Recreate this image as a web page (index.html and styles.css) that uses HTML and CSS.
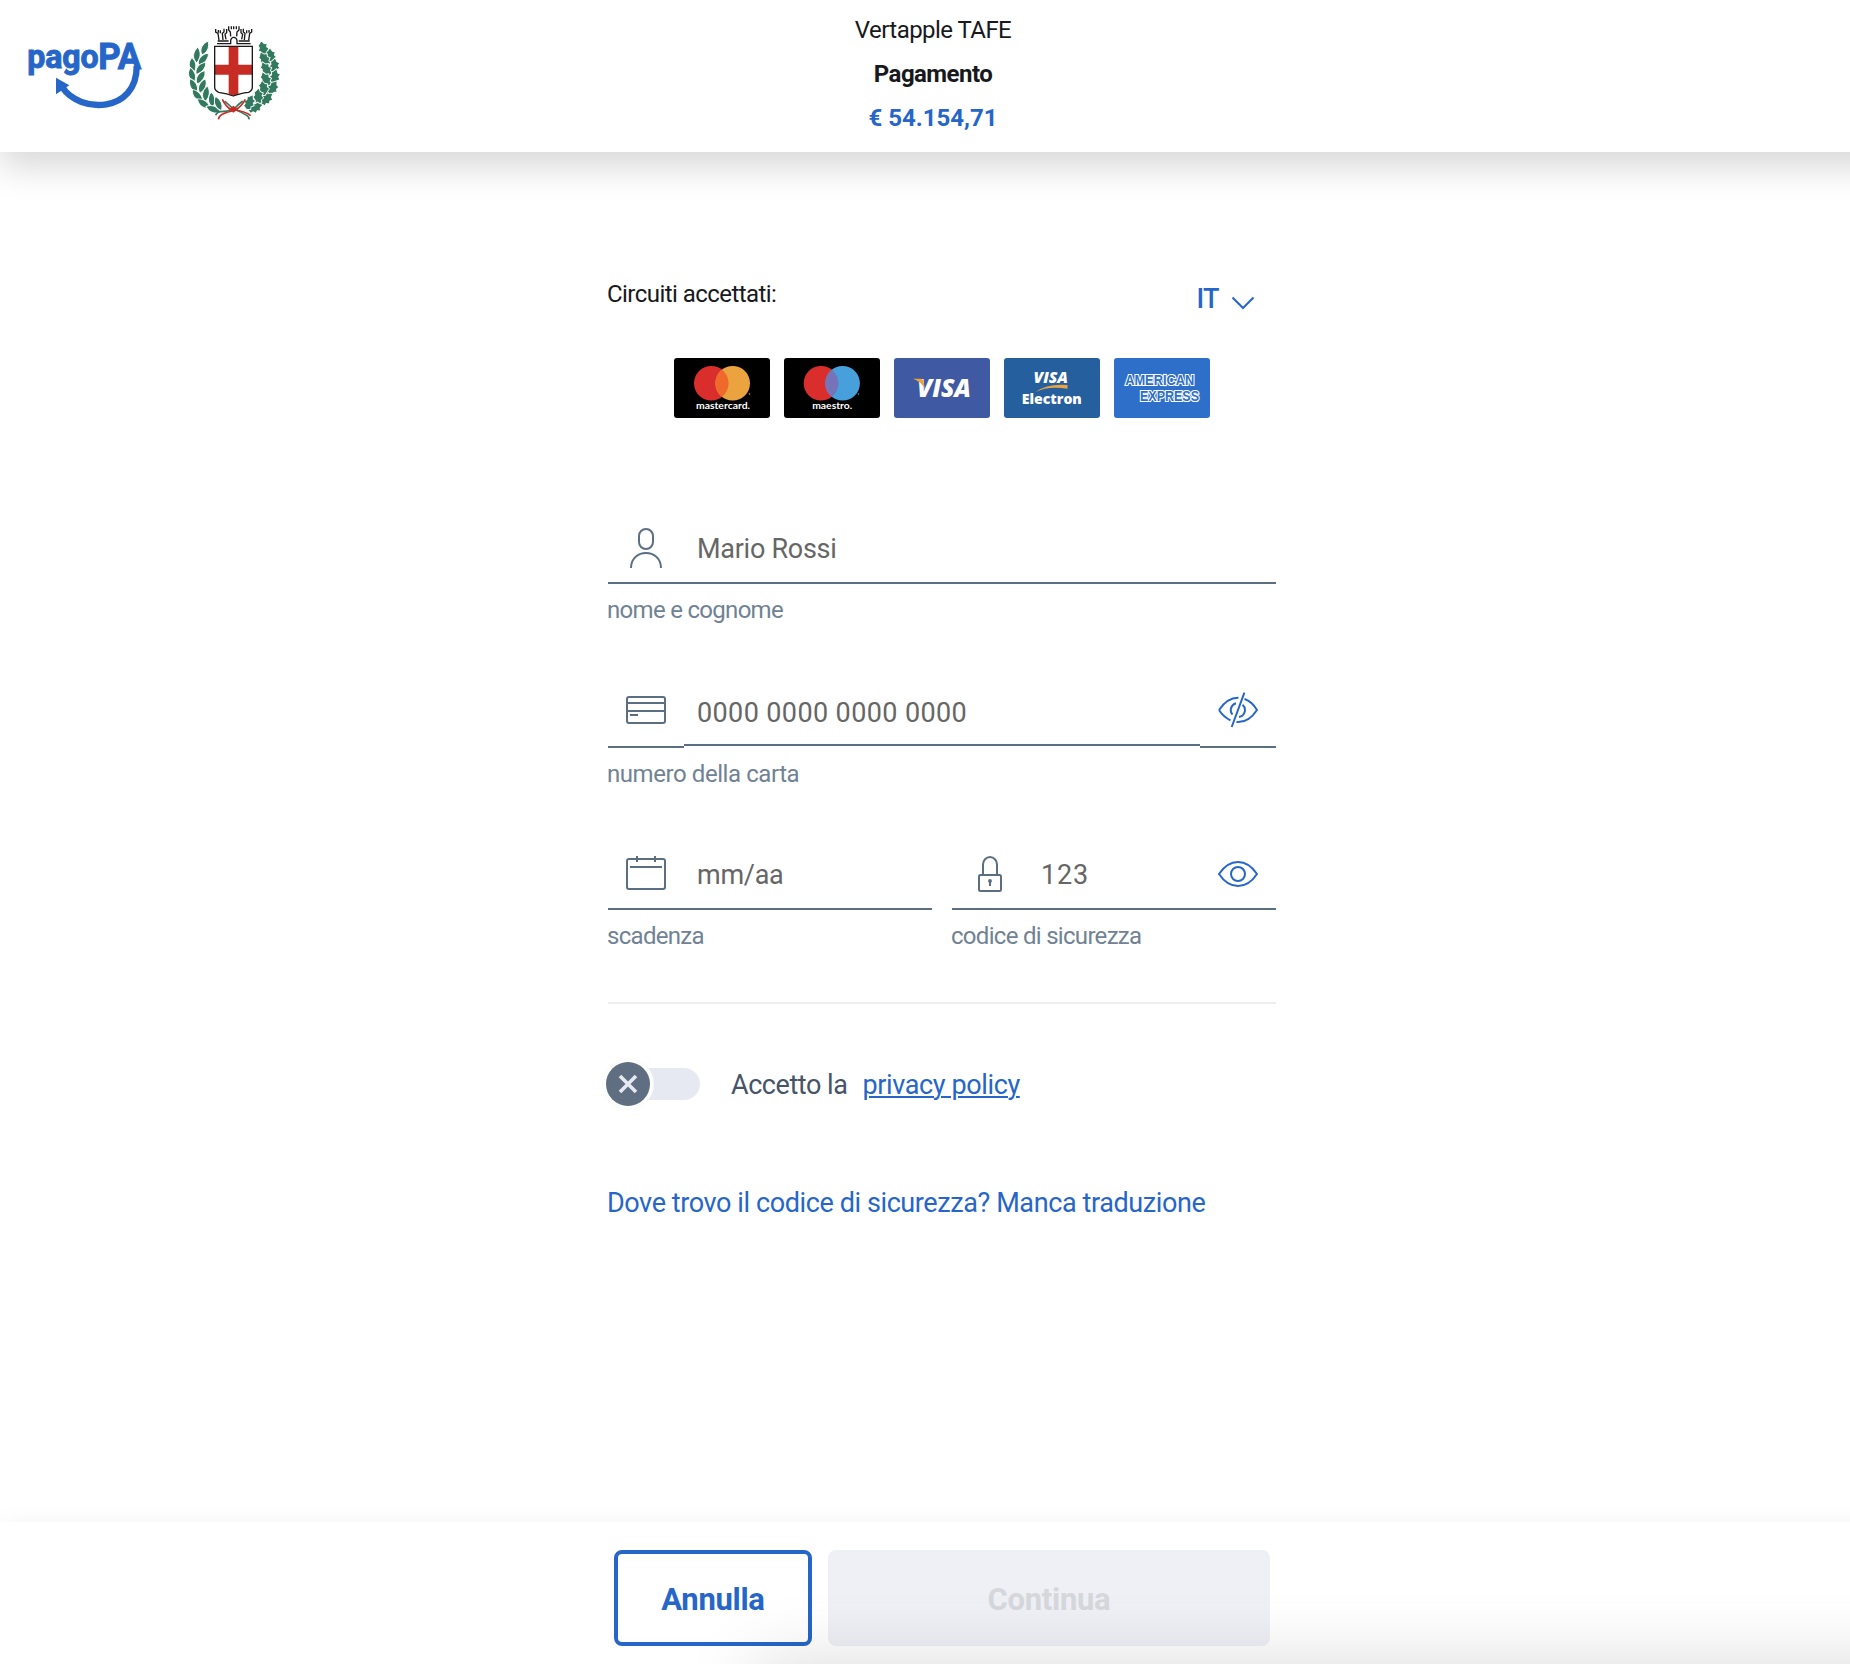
FILE: index.html
```html
<!DOCTYPE html>
<html lang="it">
<head>
<meta charset="utf-8">
<title>Pagamento - pagoPA</title>
<link rel="stylesheet" href="styles.css">
</head>
<body>
<header class="header">
  <div class="brands">
    <svg class="brand-pago" viewBox="81 120 342 204" role="img" aria-label="pagoPA">
      <g fill="#2666c8" stroke="#2666c8" stroke-width="3" font-family="Roboto, sans-serif" font-weight="700">
        <text x="82" y="205" font-size="101" textLength="213" lengthAdjust="spacingAndGlyphs">pago</text>
        <text x="295" y="207" font-size="112" textLength="128" lengthAdjust="spacingAndGlyphs">PA</text>
      </g>
      <path d="M410 198C412 338 240 343 187 262" fill="none" stroke="#2666c8" stroke-width="19"/>
      <path d="M168 233L208 256L168 283Z" fill="#2666c8"/>
    </svg>
    <svg class="brand-city" viewBox="0 0 390 390" role="img" aria-label="Comune di Milano">
      <defs>
        <path id="leaf" d="M0 4C-14-8-11-30 5-42C15-28 13-8 0 4Z"/>
        <path id="oak" d="M0 4L-12-1L-9-9L-16-16L-10-22L-13-31L-4-33L3-44L10-34L15-30L12-22L17-15L11-9L12-1Z"/>
        <g id="branch-left">
          <use href="#leaf" transform="translate(98 132) rotate(16)"/>
          <use href="#leaf" transform="translate(80 154) rotate(-2)"/><use href="#leaf" transform="translate(88 162) rotate(34)"/>
          <use href="#leaf" transform="translate(71 184) rotate(-14)"/><use href="#leaf" transform="translate(81 190) rotate(32)"/>
          <use href="#leaf" transform="translate(72 213) rotate(-22)"/><use href="#leaf" transform="translate(83 218) rotate(24)"/>
          <use href="#leaf" transform="translate(80 243) rotate(-34)"/><use href="#leaf" transform="translate(91 246) rotate(15)"/>
          <use href="#leaf" transform="translate(95 270) rotate(-48)"/><use href="#leaf" transform="translate(106 270) rotate(2)"/>
          <use href="#leaf" transform="translate(117 291) rotate(-62)"/><use href="#leaf" transform="translate(128 288) rotate(-12)"/>
          <use href="#leaf" transform="translate(148 303) rotate(-78)"/><use href="#leaf" transform="translate(153 298) rotate(-30)"/>
        </g>
        <g id="branch-right">
          <use href="#oak" transform="translate(98 134) rotate(10)"/>
          <use href="#oak" transform="translate(79 157) rotate(0)"/><use href="#oak" transform="translate(90 164) rotate(24)"/>
          <use href="#oak" transform="translate(71 187) rotate(-10)"/><use href="#oak" transform="translate(85 194) rotate(24)"/>
          <use href="#oak" transform="translate(72 219) rotate(-17)"/><use href="#oak" transform="translate(87 225) rotate(20)"/>
          <use href="#oak" transform="translate(83 250) rotate(-34)"/><use href="#oak" transform="translate(97 254) rotate(8)"/>
          <use href="#oak" transform="translate(106 279) rotate(-52)"/><use href="#oak" transform="translate(118 278) rotate(-6)"/>
          <use href="#oak" transform="translate(144 299) rotate(-74)"/><use href="#oak" transform="translate(151 294) rotate(-28)"/>
        </g>
      </defs>
      <g fill="#33795f" stroke="#fff" stroke-width="2.800">
        <use href="#branch-left"/>
        <use href="#branch-right" transform="translate(382 0) scale(-1 1)"/>
      </g>
      <g fill="none" stroke-width="5">
        <path d="M164 273Q176 284 190 297Q168 306 150 305Q140 307 137 316" stroke="#33795f"/>
        <path d="M157 268Q168 291 184 299" stroke="#c62b24"/>
        <path d="M186 303Q158 310 152 316Q147 320 145 328" stroke="#c62b24"/>
        <path d="M218 273Q204 284 192 297Q214 306 230 316Q238 321 237 328" stroke="#33795f"/>
        <path d="M226 268Q214 290 196 300Q226 304 242 317" stroke="#c62b24"/>
      </g>
      <path d="M190 287L204 298L190 308L177 298Z" fill="#c62b24"/>
      <path d="M134 109H247V232Q247 244 236 248Q208 250 190 258Q172 250 146 248Q134 244 134 232Z" fill="#fff"/>
      <path d="M176 109H205V252L190 257L176 252ZM134 164H247V194H134Z" fill="#c62b24"/>
      <path d="M134 109H247V232Q247 242 236 247Q208 250 190 258Q172 250 146 247Q134 242 134 232Z" fill="none" stroke="#1c1a1a" stroke-width="4"/>
      <g fill="none" stroke="#1c1a1a" stroke-width="4">
        <path d="M141 101H182V91Q184 82 191 82Q199 82 201 91V101H242M143 93H176M206 93H239"/>
        <path d="M147 91L144 70L137 66V57M159 90L157 70L162 66V56M236 91L239 70L245 66V57M223 90L225 70L220 66V56"/>
        <path d="M145 68V60M151 70V61M168 88L165 73L170 68V57M215 88L218 73L213 68V57M237 68V60M230 70V61"/>
        <path d="M182 79L181 66L176 60V49M200 79L201 66L207 60V49M184 58V49M191 58V49M199 58V49"/>
      </g>
    </svg>
  </div>
  <div class="summary">
    <div class="summary-payee">Vertapple TAFE</div>
    <div class="summary-subject">Pagamento</div>
    <div class="summary-amount">€ 54.154,71</div>
  </div>
</header>

<main class="main">
  <form class="form">
    <div class="top-row">
      <span class="circuits-label">Circuiti accettati:</span>
      <span class="language">IT
        <svg class="chevron" viewBox="0 0 24 14"><path d="M1.500 1.500L12 12L22.500 1.500" fill="none" stroke="#2666c8" stroke-width="2"/></svg>
      </span>
    </div>

    <div class="cards">
      <svg class="card" viewBox="0 0 96 60" role="img" aria-label="mastercard">
        <rect width="96" height="60" rx="3"/>
        <circle cx="37.300" cy="25.300" r="17.300" fill="#d92e2c"/><circle cx="58.700" cy="25.300" r="17.300" fill="#eba340"/>
        <path d="M48 11.700A17.300 17.300 0 0 1 48 38.900A17.300 17.300 0 0 1 48 11.700Z" fill="#ef6a2a"/>
        <circle cx="75.500" cy="36" r=".8" fill="#eba340"/>
        <text x="22" y="51" textLength="54" lengthAdjust="spacingAndGlyphs" class="card-name">mastercard.</text>
      </svg>
      <svg class="card" viewBox="0 0 96 60" role="img" aria-label="maestro">
        <rect width="96" height="60" rx="3"/>
        <circle cx="37" cy="25.300" r="17.300" fill="#d92e2c"/><circle cx="58.600" cy="25.300" r="17.300" fill="#47a0db"/>
        <path d="M47.800 11.700A17.300 17.300 0 0 1 47.800 38.900A17.300 17.300 0 0 1 47.800 11.700Z" fill="#7673b9"/>
        <circle cx="74.500" cy="36" r=".8" fill="#47a0db"/>
        <text x="28.200" y="51" textLength="40" lengthAdjust="spacingAndGlyphs" class="card-name">maestro.</text>
      </svg>
      <svg class="card" viewBox="0 0 96 60" role="img" aria-label="VISA">
        <rect width="96" height="60" rx="3" fill="#3f59a2"/>
        <text x="23" y="39.300" font-size="25.500" textLength="54" lengthAdjust="spacingAndGlyphs" class="visa">VISA</text>
        <path d="M19 20.800H27Q29 21 29.500 23L30.800 31Q27 23.500 19 20.800Z" fill="#eba340"/>
      </svg>
      <svg class="card" viewBox="0 0 96 60" role="img" aria-label="VISA Electron">
        <rect width="96" height="60" rx="3" fill="#265f9e"/>
        <text x="29.500" y="24.600" font-size="15.500" textLength="34.500" lengthAdjust="spacingAndGlyphs" class="visa">VISA</text>
        <path d="M31.500 34Q43 25.500 63.500 27V30.800Q44 27.600 31.500 34Z" fill="#eba340"/>
        <text x="17.800" y="46.200" font-size="14" textLength="60" lengthAdjust="spacingAndGlyphs" class="electron">Electron</text>
      </svg>
      <svg class="card" viewBox="0 0 96 60" role="img" aria-label="AMERICAN EXPRESS">
        <rect width="96" height="60" rx="3" fill="#2d6fc9"/>
        <text x="11.200" y="27" textLength="69" lengthAdjust="spacingAndGlyphs" class="amex">AMERICAN</text>
        <text x="26" y="42.600" textLength="59" lengthAdjust="spacingAndGlyphs" class="amex">EXPRESS</text>
      </svg>
    </div>

    <div class="field field-name">
      <div class="control">
        <span class="addon"><svg width="32" height="40" viewBox="0 0 32 40"><rect x="9" y="1" width="14" height="20" rx="7"/><path d="M1 40C1 20 31 20 31 40"/></svg></span>
        <input class="input" type="text" placeholder="Mario Rossi">
      </div>
      <label class="label">nome e cognome</label>
    </div>

    <div class="field field-number">
      <div class="control">
        <span class="addon"><svg width="40" height="28" viewBox="0 0 40 28"><rect x="1" y="1" width="38" height="26" rx="2"/><path d="M1 7H39M1 15H39M4 19H12"/></svg></span>
        <input class="input input-number" type="text" placeholder="0000 0000 0000 0000">
        <span class="addon"><svg class="eye" width="40" height="36" viewBox="0 0 40 36"><path d="M1 18Q9.500 5.500 20.500 5.800M26.500 7Q34 9.500 39 18Q30.500 31 18.500 30M12.500 28.300Q5.500 25 1 18M18 11.200A7 7 0 0 0 14.500 22.600M24.500 12.700A7 7 0 0 1 21 24.900M26.400 .7L13.700 35"/></svg></span>
      </div>
      <label class="label">numero della carta</label>
    </div>

    <div class="field-row">
      <div class="field">
        <div class="control">
          <span class="addon addon-calendar"><svg width="40" height="34" viewBox="0 0 40 34"><rect x="1" y="3" width="38" height="30" rx="2"/><path d="M4 11H36M11 0V6M29 0V6"/></svg></span>
          <input class="input" type="text" placeholder="mm/aa">
        </div>
        <label class="label">scadenza</label>
      </div>
      <div class="field">
        <div class="control">
          <span class="addon"><svg width="24" height="36" viewBox="0 0 24 36"><rect x="1" y="19" width="22" height="16" rx="1.500"/><path d="M5 19V8.500A7 7.500 0 0 1 19 8.500V19"/><path d="M12 25V30" stroke-width="2"/><circle cx="12" cy="25" r="1.200" fill="#5c6f82" stroke-width="1.500"/></svg></span>
          <input class="input input-cvc" type="text" placeholder="123">
          <span class="addon"><svg class="eye" width="40" height="26" viewBox="0 0 40 26"><path d="M1 13Q9 1 20 1Q31 1 39 13Q31 25 20 25Q9 25 1 13Z"/><circle cx="20" cy="13" r="7"/></svg></span>
        </div>
        <label class="label">codice di sicurezza</label>
      </div>
    </div>

    <hr class="divider">

    <div class="consent">
      <span class="toggle"><span class="toggle-knob"><svg width="20" height="20" viewBox="0 0 20 20"><path d="M2 2L18 18M18 2L2 18" stroke="#e6e9f2" stroke-width="3.600"/></svg></span></span>
      <span class="consent-text">Accetto la</span>
      <a class="consent-link" href="#">privacy policy</a>
    </div>

    <a class="help" href="#">Dove trovo il codice di sicurezza? Manca traduzione</a>
  </form>
</main>

<footer class="footer">
  <button class="btn btn-cancel" type="button">Annulla</button>
  <button class="btn btn-continue" type="button" disabled>Continua</button>
  <div class="sheet-shadow"></div>
</footer>
</body>
</html>
```

FILE: styles.css
```css
* {
  box-sizing: border-box;
}

body {
  margin: 0;
  min-height: 1664px;
  display: flex;
  flex-direction: column;
  background: #fff;
  color: #17191c;
  font-family: Roboto, "Liberation Sans", sans-serif;
  font-size: 24px;
  letter-spacing: -0.55px;
  overflow-x: hidden;
}

a {
  color: #2666c8;
  text-decoration: none;
}

/* Header: runs past the right edge so its shadow does not fade there */

.header {
  display: grid;
  grid-template-columns: 1fr auto 1fr;
  width: calc(100% + 40px);
  height: 152px;
  padding: 8px 40px 12px 16px;
  box-shadow: 0 16px 32px rgba(0, 0, 0, 0.15);
}

.brands {
  display: flex;
  align-items: flex-start;
  gap: 29px;
  padding: 2px 0 0 11px;
}

.brand-pago {
  width: 114px;
  height: 68px;
  margin-top: 30px;
  overflow: visible;
}

.brand-city {
  width: 130px;
  height: 130px;
}

.summary {
  line-height: 44px;
  text-align: center;
}

.summary-subject,
.summary-amount {
  font-weight: 700;
}

.summary-amount {
  color: #2666c8;
  letter-spacing: 0;
}

/* Form */

.main {
  flex: 1;
  padding: 120px 0 0 34px;
}

.form {
  width: 668px;
  margin: 0 auto;
}

.top-row {
  display: flex;
  justify-content: space-between;
  height: 54px;
  padding-right: 21px;
}

.circuits-label {
  margin-left: -1px;
  line-height: 44px;
}

.language {
  display: flex;
  align-items: center;
  gap: 12px;
  color: #2666c8;
  font-size: 27px;
  font-weight: 500;
}

.chevron {
  width: 24px;
  height: 14px;
  margin-top: 7px;
}

.cards {
  display: flex;
  justify-content: center;
  gap: 14px;
  margin-top: 32px;
}

.card {
  width: 96px;
  height: 60px;
}

.card-name {
  fill: #fff;
  font: 700 9.5px Lato, sans-serif;
  letter-spacing: 0;
}

.visa {
  fill: #fff;
  font-family: "Open Sans", sans-serif;
  font-weight: 800;
  font-style: italic;
  letter-spacing: 0;
}

.electron {
  fill: #fff;
  font-family: "Open Sans", sans-serif;
  font-weight: 800;
  letter-spacing: 0;
}

.amex {
  fill: #2d6fc9;
  stroke: #fff;
  stroke-width: 2.2px;
  paint-order: stroke;
  font: 700 14px "Liberation Sans", sans-serif;
  letter-spacing: 0;
}

.control {
  display: flex;
  height: 70px;
}

.addon {
  display: flex;
  align-items: center;
  justify-content: center;
  flex: 0 0 76px;
  border-bottom: 2px solid #5c6f82;
}

.addon svg {
  fill: none;
  stroke: #5c6f82;
  stroke-width: 2;
}

.addon .eye {
  stroke: #2666c8;
}

.addon-calendar {
  padding-bottom: 2px;
}

.input {
  flex: 1;
  min-width: 0;
  padding: 2px 0 0 13px;
  border: 0;
  border-bottom: 2px solid #5c6f82;
  background: none;
  font: 27px Roboto, "Liberation Sans", sans-serif;
  letter-spacing: -0.27px;
  outline: 0;
}

.input::placeholder {
  color: #666;
  opacity: 1;
}

.input-cvc {
  letter-spacing: 0.8px;
}

.label {
  display: block;
  margin: 10px 0 0 -1px;
  line-height: 32px;
  color: #708294;
  letter-spacing: -0.7px;
}

.field-name {
  margin-top: 96px;
}

.field-number {
  margin-top: 52px;
}

.field-number .addon {
  padding-bottom: 4px;
}

.input-number {
  height: 68px;
  padding-top: 4px;
  letter-spacing: 0.38px;
}

.field-number .label {
  letter-spacing: -0.43px;
}

.field-row {
  display: grid;
  grid-template-columns: repeat(2, minmax(0, 1fr));
  gap: 20px;
  margin-top: 50px;
}

.divider {
  margin: 50px 0 0;
  border: 0;
  border-top: 2px solid #eee;
}

.consent {
  display: flex;
  align-items: center;
  height: 44px;
  margin: 58px 0 0 -2px;
  font-size: 27px;
  letter-spacing: -0.45px;
}

.toggle {
  display: flex;
  align-items: center;
  width: 94px;
  height: 32px;
  margin-right: 31px;
  border-radius: 16px;
  background: linear-gradient(90deg, #fff 20px, #e6e9f2 20px);
}

.toggle-knob {
  display: flex;
  align-items: center;
  justify-content: center;
  width: 44px;
  height: 44px;
  flex: none;
  border-radius: 50%;
  background: #5f6e80;
  box-shadow: 0 0 0 3px #fff, 0 0 0 4px #fafafb;
}

.consent-text,
.consent-link {
  padding-top: 2px;
}

.consent-text {
  color: #455468;
}

.consent-link {
  margin-left: 15px;
  letter-spacing: -0.38px;
  text-decoration: underline;
  text-decoration-thickness: 2px;
  text-underline-offset: 2px;
}

.help {
  display: block;
  margin: 77px 0 0 -1px;
  line-height: 40px;
  font-size: 27px;
  letter-spacing: -0.4px;
}

/* Footer */

.footer {
  position: relative;
  display: flex;
  justify-content: center;
  gap: 16px;
  width: calc(100% + 40px);
  height: 142px;
  padding: 28px 40px 0 34px;
  background: #fff;
  box-shadow: 0 16px 32px rgba(0, 0, 0, 0.15);
  overflow: hidden;
}

.btn {
  height: 96px;
  padding: 2px 0 0;
  border: 0;
  border-radius: 8px;
  font: 700 31px Roboto, "Liberation Sans", sans-serif;
  letter-spacing: -0.3px;
}

.btn-cancel {
  width: 198px;
  border: 4px solid #2666c8;
  background: #fff;
  color: #2666c8;
}

.btn-continue {
  width: 442px;
  background: #eff0f6;
  color: #d5d7db;
}

/* Top edge of the bottom sheet's shadow, cast over the footer */
.sheet-shadow {
  position: absolute;
  top: 142px;
  left: 755px;
  right: -100px;
  height: 100px;
  box-shadow: 0 0 72px rgba(0, 0, 0, 0.15);
  pointer-events: none;
}
```
